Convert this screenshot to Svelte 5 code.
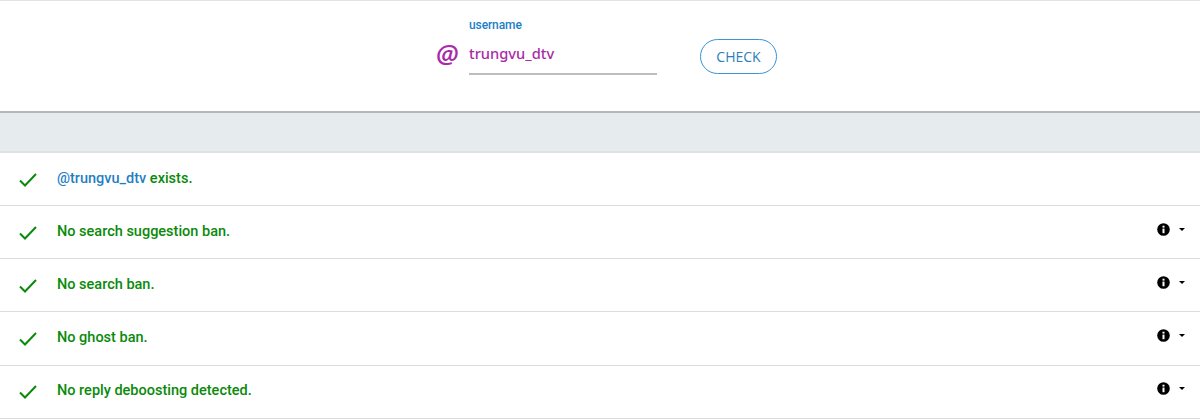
<script>
  const rows = [
    { text: 'No search suggestion ban.' },
    { text: 'No search ban.' },
    { text: 'No ghost ban.' },
    { text: 'No reply deboosting detected.' }
  ];
</script>

{#snippet check()}
  <svg class="check" width="18" height="14" viewBox="0 0 18 14" aria-hidden="true">
    <path d="M1 7.5 L6 12.5 L17 1" fill="none" stroke="#0a8a0a" stroke-width="2" />
  </svg>
{/snippet}

<div class="page">
  <header class="top">
    <span class="at">@</span>
    <div class="field">
      <div class="label">username</div>
      <div class="value">trungvu_dtv</div>
    </div>
    <button class="btn">CHECK</button>
  </header>
  <div class="band"></div>
  <ul class="list">
    <li class="row">
      {@render check()}
      <span class="msg"><span class="user">@trungvu_dtv</span> exists.</span>
    </li>
    {#each rows as r}
      <li class="row">
        {@render check()}
        <span class="msg">{r.text}</span>
        <span class="more">
          <svg width="13" height="13" viewBox="0 0 13 13" aria-hidden="true">
            <circle cx="6.5" cy="6.5" r="6.3" fill="#000" />
            <rect x="5.5" y="5.6" width="2" height="4.6" fill="#fff" />
            <rect x="5.5" y="2.7" width="2" height="1.9" fill="#fff" />
          </svg>
          <span class="caret"></span>
        </span>
      </li>
    {/each}
  </ul>
</div>

<style>
  :global(body) {
    margin: 0;
    background: #fff;
  }
  .page {
    width: 1200px;
    height: 419px;
    overflow: hidden;
    font-family: Roboto, sans-serif;
    background: #fff;
  }
  .top {
    box-sizing: border-box;
    height: 113px;
    border-top: 1px solid #e0e4e8;
    border-bottom: 2px solid #b4b6b8;
    background: #fff;
    display: flex;
    justify-content: center;
    padding-top: 17px;
    padding-left: 13px;
  }
  .at {
    width: 33px;
    margin-top: 20px;
    font-family: "Open Sans", sans-serif;
    font-size: 26px;
    line-height: 30px;
    font-weight: 600;
    font-style: italic;
    color: #a92ba9;
  }
  .field {
    width: 188px;
    height: 57px;
    box-sizing: border-box;
    border-bottom: 2px solid #bdbdbd;
  }
  .label {
    font-size: 12px;
    letter-spacing: -0.1px;
    font-weight: 500;
    line-height: 14px;
    color: #1a7fc8;
  }
  .value {
    margin-top: 7px;
    font-family: "Noto Sans", sans-serif;
    font-size: 14.7px;
    font-weight: 500;
    line-height: 28px;
    color: #a92ba9;
  }
  .btn {
    box-sizing: border-box;
    width: 77px;
    height: 35px;
    margin: 21px 0 0 43px;
    padding: 0;
    border: 1px solid #3a93d2;
    border-radius: 18px;
    background: #fff;
    color: #2a7fba;
    font-family: "Open Sans", sans-serif;
    font-size: 14px;
  }
  .band {
    box-sizing: border-box;
    height: 40px;
    background: #e6ebee;
    border-bottom: 2px solid #dfe1e3;
  }
  .list {
    list-style: none;
    margin: 0;
    padding: 0;
  }
  .row {
    box-sizing: border-box;
    height: 53.15px;
    display: flex;
    align-items: center;
    padding: 0 15px 0 19px;
    border-bottom: 1px solid #dcdcdc;
  }
  .check {
    flex: none;
    margin-top: 1px;
  }
  .msg {
    margin-left: 20px;
    font-size: 14.5px;
    font-weight: 500;
    color: #0a8a0a;
    flex: 1;
    position: relative;
    top: -1px;
  }
  .user {
    color: #1f7fc4;
  }
  .more {
    display: flex;
    align-items: center;
    gap: 9px;
    position: relative;
    top: -3px;
  }
  .more svg {
    display: block;
  }
  .caret {
    width: 0;
    height: 0;
    border-left: 3.5px solid transparent;
    border-right: 3.5px solid transparent;
    border-top: 3.5px solid #000;
  }
</style>
